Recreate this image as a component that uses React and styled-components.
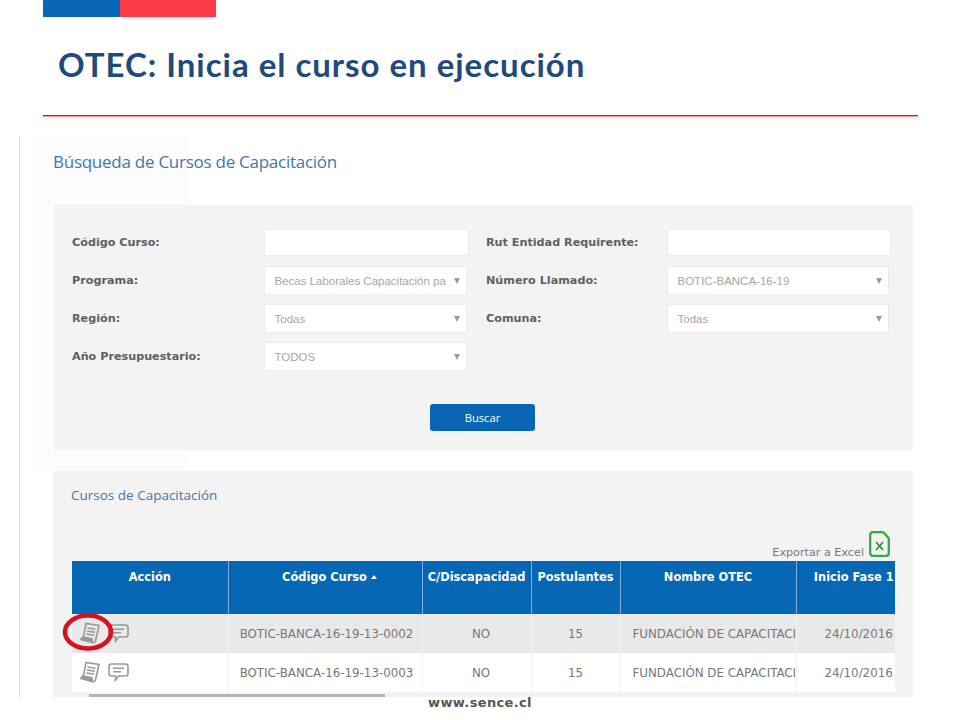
import React from 'react';
import styled, { createGlobalStyle } from 'styled-components';

const GlobalStyle = createGlobalStyle`
  html, body { margin: 0; padding: 0; background: #fff; }
  * { box-sizing: border-box; }
`;

const Slide = styled.div`
  width: 960px;
  height: 720px;
  overflow: hidden;
  background: #fff;
  display: flex;
  flex-direction: column;
`;

const Flag = styled.div`
  display: flex;
  flex: none;
  width: 173px;
  height: 17px;
  margin-left: 43px;
`;

const FlagPart = styled.div`
  width: ${({ $w }) => $w}px;
  background: ${({ $color }) => $color};
`;

const SlideTitle = styled.h1`
  flex: none;
  height: 98px;
  margin: 0 0 0 58px;
  padding-top: 25px;
  font: 700 33px/44px Lato, "Liberation Sans", sans-serif;
  letter-spacing: 0.97px;
  color: #1f4a7c;
`;

const Rule = styled.div`
  flex: none;
  width: 875px;
  height: 1px;
  margin-left: 43px;
  background: #e0141e;
  box-shadow: 0 1px 0 #f0a0a4, 0 3px 2px #ece6ea;
`;

const Shot = styled.section`
  flex: none;
  height: 561px;
  margin: 20px 0 0 19px;
  padding: 0 47px 0 33px;
  border-left: 1px solid #dcdcdc;
  overflow: hidden;
  background: linear-gradient(#fcfcfc, #fcfcfc) 15px 0 / 153px 334px no-repeat;
`;

const ShotTitle = styled.h2`
  height: 69px;
  margin: 0;
  padding-top: 13px;
  font: 400 17px/26px "Open Sans", sans-serif;
  letter-spacing: -0.26px;
  color: #3f78a8;
`;

const Panel = styled.div`
  background: #f3f3f3;
  border-radius: 3px;
  padding-left: 19px;
`;

const SearchPanel = styled(Panel)`
  height: 245px;
  padding-top: 24px;
  margin-bottom: 21px;
`;

const FormGrid = styled.div`
  display: grid;
  grid-template-columns: 192px 205px 17px 181px 224px;
  grid-template-rows: 29px repeat(3, 30px);
  row-gap: 8px;
`;

const Label = styled.label`
  grid-column: ${({ $right }) => ($right ? 4 : 1)};
  font: 700 11.2px/${({ $tall }) => ($tall ? 29 : 28)}px "DejaVu Sans", sans-serif;
  color: #5f5f5f;
`;

const TextBox = styled.div`
  grid-column: ${({ $right }) => ($right ? 5 : 2)};
  height: 27px;
  background: #fff;
  border: 1px solid #ececec;
`;

const SelectBox = styled.div`
  grid-column: ${({ $right }) => ($right ? 5 : 2)};
  display: flex;
  align-items: center;
  justify-content: space-between;
  width: ${({ $right }) => ($right ? 222 : 203)}px;
  height: 29px;
  padding: 0 6px 0 9.5px;
  background: #fff;
  border: 1px solid #ececec;
  font: 400 11.5px "Liberation Sans", sans-serif;
  color: #a6a6a6;
`;

const Caret = styled.span`
  flex: none;
  width: 0;
  height: 0;
  border: 3px solid transparent;
  border-top: 6px solid #999;
  border-bottom: 0;
`;

const ButtonRow = styled.div`
  display: flex;
  justify-content: center;
  width: 859px;
  margin-left: -19px;
  padding-top: 32px;
`;

const SearchButton = styled.button`
  width: 105px;
  height: 27px;
  border: 0;
  border-radius: 3px;
  background: #0a66b5;
  color: #fff;
  font: 400 11.2px "Open Sans", sans-serif;
  padding: 0;
`;

const ResultsPanel = styled(Panel)`
  height: 240px;
  padding-top: 14px;
`;

const ResultsTitle = styled.h3`
  margin: 0 0 0 -1px;
  height: 46px;
  font: 400 13.5px/20px "Open Sans", sans-serif;
  color: #3f78a8;
`;

const ExportRow = styled.div`
  display: flex;
  align-items: flex-end;
  justify-content: flex-end;
  gap: 5px;
  width: 818px;
  height: 30px;
  padding-bottom: 4px;
  font: 400 11.2px/13px "DejaVu Sans", sans-serif;
  color: #777;
`;

const ExportText = styled.span`
  margin-bottom: -2px;
`;

const TableArea = styled.div`
  position: relative;
  width: 823px;
`;

const TableClip = styled.div`
  overflow: hidden;
`;

const Table = styled.table`
  width: 839px;
  table-layout: fixed;
  border-collapse: collapse;
  font-family: "DejaVu Sans", sans-serif;
  font-size: 11.85px;
`;

const HeadCell = styled.th`
  height: 53px;
  padding: 9px 0 0 ${({ $shift }) => $shift || 0}px;
  vertical-align: top;
  background: #0667b5;
  border-left: 1px solid #7fb2de;
  color: #fff;
  font-weight: 700;
  font-size: 11.4px;
  line-height: 14px;
  text-align: center;
  white-space: nowrap;
  &:first-child { border-left: 0; }
`;

const SortMark = styled.span`
  display: inline-block;
  width: 0;
  height: 0;
  margin: 0 0 2px 4px;
  border: 3px solid transparent;
  border-bottom: 4px solid #fff;
  border-top: 0;
`;

const Row = styled.tr`
  background: ${({ $shaded }) => ($shaded ? '#e9e9e9' : '#fff')};
`;

const Cell = styled.td`
  height: 39px;
  padding: 0 0 0 ${({ $shift }) => $shift || 0}px;
  border-left: 1px solid #f0f0f0;
  color: #777;
  text-align: center;
  white-space: nowrap;
  overflow: hidden;
  &:first-child { border-left: 0; }
`;

const OtecCell = styled(Cell)`
  padding-left: 12px;
  text-align: left;
`;

const DateCell = styled(Cell)`
  padding-left: 28px;
  text-align: left;
`;

const Actions = styled.div`
  display: flex;
  align-items: center;
  gap: 7px;
  padding-left: 7px;
`;

const Highlight = styled.svg`
  position: absolute;
  left: -10px;
  top: 51px;
`;

const ScrollTrack = styled.div`
  height: 10px;
  padding-left: 17px;
  background: #f1f1f1;
`;

const ScrollThumb = styled.div`
  width: 296px;
  height: 6px;
  margin-top: 2px;
  background: #b4b4b4;
`;

const Footer = styled.footer`
  flex: 1;
  display: flex;
  justify-content: center;
  font: 700 13px/10px "DejaVu Sans", sans-serif;
  padding-top: 1px;
  letter-spacing: 0.35px;
  color: #555;
`;

const DocIcon = () => (
  <svg width="22" height="23" viewBox="0 0 22 23" fill="none" stroke="#999" strokeWidth="1.6">
    <path d="M7 1.5 L20 3.5 L16.5 19 Q15.5 21.5 13 20.5 L2 17.5 L4.5 14.5 Z" />
    <path d="M2 17.5 Q2.5 15 5 15 L13 17 Q13.5 19 13 20.5" fill="#999" />
    <path d="M8.5 6 L16.5 7.3 M8 9 L16 10.3 M7.3 12 L15.2 13.3" strokeWidth="1.4" />
  </svg>
);

const ChatIcon = () => (
  <svg width="21" height="19" viewBox="0 0 21 19" fill="none" stroke="#999" strokeWidth="1.6">
    <path d="M3.5 1 H17.5 Q20 1 20 3.5 V10.5 Q20 13 17.5 13 H10.5 L7.5 17 V13 H3.5 Q1 13 1 10.5 V3.5 Q1 1 3.5 1 Z" />
    <path d="M5 5.2 H16 M5 8.8 H13" />
  </svg>
);

const ExcelIcon = () => (
  <svg width="21" height="26" viewBox="0 0 21 26" fill="none" stroke="#3aa648" strokeWidth="2.3">
    <path d="M4 1.2 H13 Q15 1.2 16 3 L19.8 7.5 V22 Q19.8 24.8 17 24.8 H4 Q1.2 24.8 1.2 22 V4 Q1.2 1.2 4 1.2 Z" />
    <path d="M7 11 L14 19 M14 11 L7 19" strokeWidth="1.8" stroke="#2f8f3f" />
  </svg>
);

const fields = [
  { label: 'Código Curso:', right: { label: 'Rut Entidad Requirente:' } },
  { label: 'Programa:', value: 'Becas Laborales Capacitación pa', right: { label: 'Número Llamado:', value: 'BOTIC-BANCA-16-19' } },
  { label: 'Región:', value: 'Todas', right: { label: 'Comuna:', value: 'Todas' } },
  { label: 'Año Presupuestario:', value: 'TODOS' },
];

const Field = ({ label, value, right }) => (
  <>
    <Label $right={right} $tall={!!value}>{label}</Label>
    {value ? (
      <SelectBox $right={right}>
        <span>{value}</span>
        <Caret />
      </SelectBox>
    ) : (
      <TextBox $right={right} />
    )}
  </>
);

const rows = [
  { code: 'BOTIC-BANCA-16-19-13-0002', shaded: true },
  { code: 'BOTIC-BANCA-16-19-13-0003', shaded: false },
];

const columns = [156, 194, 109, 89, 176, 115];

export default function App() {
  return (
    <Slide>
      <GlobalStyle />
      <Flag>
        <FlagPart $w={77} $color="#0a67b8" />
        <FlagPart $w={96} $color="#fb3c46" />
      </Flag>
      <SlideTitle>OTEC: Inicia el curso en ejecución</SlideTitle>
      <Rule />
      <Shot>
        <ShotTitle>Búsqueda de Cursos de Capacitación</ShotTitle>
        <SearchPanel>
          <FormGrid>
            {fields.map((f) => (
              <React.Fragment key={f.label}>
                <Field label={f.label} value={f.value} />
                {f.right && <Field label={f.right.label} value={f.right.value} right />}
              </React.Fragment>
            ))}
          </FormGrid>
          <ButtonRow>
            <SearchButton>Buscar</SearchButton>
          </ButtonRow>
        </SearchPanel>
        <ResultsPanel>
          <ResultsTitle>Cursos de Capacitación</ResultsTitle>
          <ExportRow>
            <ExportText>Exportar a Excel</ExportText>
            <ExcelIcon />
          </ExportRow>
          <TableArea>
            <TableClip>
              <Table>
                <colgroup>
                  {columns.map((w, i) => (
                    <col key={i} width={w} />
                  ))}
                </colgroup>
                <thead>
                  <tr>
                    <HeadCell>Acción</HeadCell>
                    <HeadCell $shift={9}>Código Curso<SortMark /></HeadCell>
                    <HeadCell>C/Discapacidad</HeadCell>
                    <HeadCell>Postulantes</HeadCell>
                    <HeadCell>Nombre OTEC</HeadCell>
                    <HeadCell>Inicio Fase 1</HeadCell>
                  </tr>
                </thead>
                <tbody>
                  {rows.map((r) => (
                    <Row key={r.code} $shaded={r.shaded}>
                      <Cell>
                        <Actions>
                          <DocIcon />
                          <ChatIcon />
                        </Actions>
                      </Cell>
                      <Cell $shift={3}>{r.code}</Cell>
                      <Cell $shift={9}>NO</Cell>
                      <Cell>15</Cell>
                      <OtecCell>FUNDACIÓN DE CAPACITACIÓN</OtecCell>
                      <DateCell>24/10/2016</DateCell>
                    </Row>
                  ))}
                </tbody>
              </Table>
            </TableClip>
            <Highlight width="52" height="40" viewBox="0 0 52 40" fill="none">
              <ellipse cx="26" cy="20" rx="23" ry="16.5" stroke="#d6121f" strokeWidth="4.5" />
            </Highlight>
            <ScrollTrack>
              <ScrollThumb />
            </ScrollTrack>
          </TableArea>
        </ResultsPanel>
      </Shot>
      <Footer>www.sence.cl</Footer>
    </Slide>
  );
}
